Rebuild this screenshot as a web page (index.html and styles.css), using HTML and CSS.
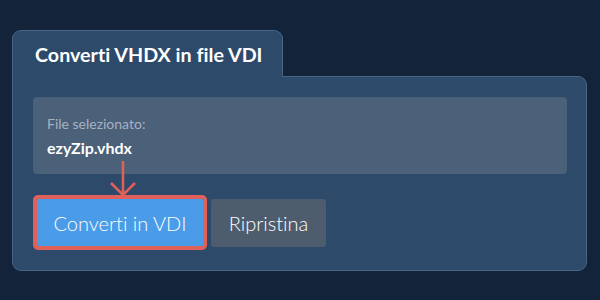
FILE: index.html
```html
<!DOCTYPE html>
<html lang="it">
<head>
    <meta charset="UTF-8">
    <meta name="viewport" content="width=device-width, initial-scale=1.0">
    <title>Converti VHDX in file VDI</title>
    <link rel="stylesheet" href="styles.css">
</head>
<body>
    <div class="container">
        <div class="tab">Converti VHDX in file VDI</div>
        <div class="panel">
            <div class="file-box">
                <p class="file-label">File selezionato:</p>
                <p class="file-name">ezyZip.vhdx</p>
            </div>
            <div class="actions">
                <div class="highlight">
                    <svg class="arrow" viewBox="0 0 30 36">
                        <path d="M15 0 V34 M3 22 L15 34 L27 22"></path>
                    </svg>
                    <button class="btn btn-primary">Converti in VDI</button>
                </div>
                <button class="btn btn-secondary">Ripristina</button>
            </div>
        </div>
    </div>
</body>
</html>
```

FILE: styles.css
```css
body {
    margin: 0;
    background-color: #12233a;
    font-family: Lato, "Noto Sans", sans-serif;
    font-variant-ligatures: none;
    overflow: hidden;
}

.container {
    padding: 30px 13px 0 12px;
}

.tab {
    display: inline-block;
    position: relative;
    z-index: 1;
    padding: 12px 20px 11px 22px;
    background-color: #2d4a6b;
    border: 1px solid #4a6584;
    border-bottom: none;
    border-radius: 9px 9px 0 0;
    color: #fff;
    font-size: 19.7px;
    font-weight: bold;
    margin-bottom: -1px;
}

.panel {
    background-color: #2d4a6b;
    border: 1px solid #4a6584;
    border-radius: 0 9px 9px 9px;
    padding: 20px 19px 20px 20px;
}

.file-box {
    background-color: #4b6079;
    border-radius: 4px;
    padding: 18px 14px 17px;
}

.file-label {
    margin: 0 0 6px;
    color: #a6b2c1;
    font-size: 14px;
}

.file-name {
    margin: 0;
    color: #fff;
    font-size: 16px;
    font-weight: bold;
}

.actions {
    display: flex;
    align-items: center;
    gap: 4px;
    margin-top: 21px;
}

.highlight {
    position: relative;
    border: 4px solid #e0605a;
    border-radius: 5px;
    display: flex;
}

.arrow {
    position: absolute;
    left: 71px;
    top: -38px;
    width: 30px;
    height: 36px;
    fill: none;
    stroke: #e0605a;
    stroke-width: 2.5;
}

.btn {
    border: none;
    border-radius: 3px;
    color: #fff;
    font-family: Lato, "Noto Sans", sans-serif;
    font-variant-ligatures: none;
    font-size: 20px;
    font-weight: 300;
    height: 47px;
    cursor: pointer;
}

.btn-primary {
    width: 166px;
    background-color: #4a9be8;
    border-radius: 1px;
}

.btn-secondary {
    width: 115px;
    height: 48px;
    background-color: #4e5d6d;
}
```
